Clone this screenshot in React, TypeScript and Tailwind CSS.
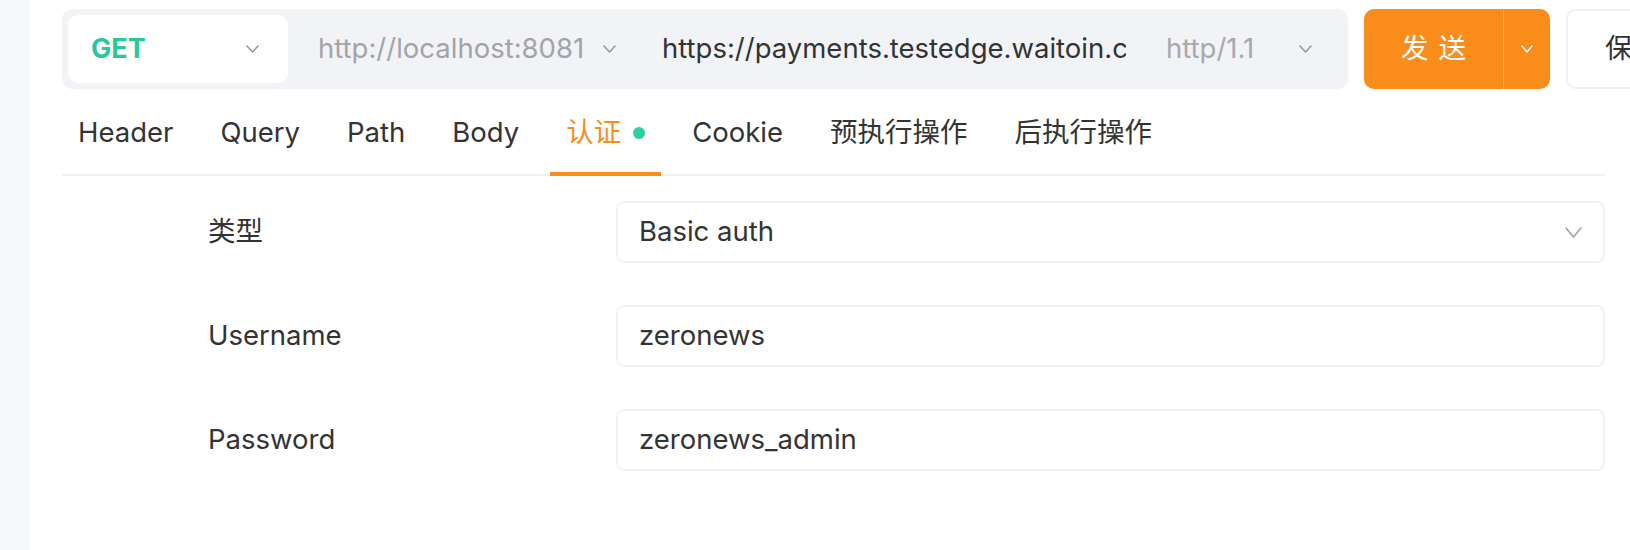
import { Fragment } from 'react';

const font = { fontFamily: 'Inter, "Noto Sans CJK SC", sans-serif' };

function Chevron({ color = '#9a9a9a', w = 13, h = 8 }: { color?: string; w?: number; h?: number }) {
  return (
    <svg width={w} height={h} viewBox={`0 0 ${w} ${h}`} className="flex-none">
      <polyline
        points={`1,1 ${w / 2},${h - 1} ${w - 1},1`}
        fill="none"
        stroke={color}
        strokeWidth="1.6"
        strokeLinecap="round"
        strokeLinejoin="round"
      />
    </svg>
  );
}

export default function App() {
  const tabs = ['Header', 'Query', 'Path', 'Body', '认证', 'Cookie', '预执行操作', '后执行操作'];

  const fields = [
    { label: '类型', value: 'Basic auth', select: true },
    { label: 'Username', value: 'zeronews', select: false },
    { label: 'Password', value: 'zeronews_admin', select: false },
  ];

  return (
    <div className="flex w-full h-[550px] overflow-hidden bg-white" style={font}>
      {/* left rail */}
      <div className="w-[30px] flex-none bg-[#f7f8fa]" />

      <div className="flex-1 min-w-0 pl-[32px] pt-[9px] pr-[25px]">
        {/* request bar */}
        <div className="flex items-center gap-[16px] w-[1700px]">
          <div className="flex items-center w-[1286px] h-[80px] p-[6px] rounded-[10px] bg-[#f2f3f7] flex-none">
            <div className="flex items-center justify-between w-[220px] h-[68px] pl-[23px] pr-[29px] rounded-[10px] bg-white flex-none">
              <span className="text-[27px] font-bold text-[#27c99c]">GET</span>
              <Chevron />
            </div>
            <span className="ml-[30px] w-[267px] flex-none text-[27.5px] text-[#a3a3a8] whitespace-nowrap">http://localhost:8081</span>
            <span className="ml-[18px]"><Chevron /></span>
            <div className="ml-[46px] w-[464px] flex-none overflow-hidden whitespace-nowrap text-[27.5px] text-[#333]">
              https://payments.testedge.waitoin.com/api/v1/auth
            </div>
            <span className="ml-[40px] w-[92px] flex-none text-[27.5px] text-[#a8a8ad] whitespace-nowrap">http/1.1</span>
            <span className="ml-[41px]"><Chevron /></span>
          </div>

          <div className="flex h-[80px] rounded-[10px] bg-[#f98c1a] overflow-hidden flex-none">
            <button className="flex items-center justify-center gap-[10px] w-[139px] text-[27.5px] text-white">
              <span>发</span>
              <span>送</span>
            </button>
            <div className="w-[1px] bg-[#fbae5c]" />
            <button className="flex items-center justify-center w-[46px]">
              <Chevron color="#ffffff" w={12} h={8} />
            </button>
          </div>

          <button className="h-[80px] px-[37px] rounded-[10px] border-2 border-[#f0f0f2] bg-white text-[27.5px] text-[#333] flex-none">
            保存
          </button>
        </div>

        {/* tabs */}
        <div className="flex gap-[15px] h-[87px] pt-[2px] border-b-2 border-[#f0f0f0]">
          {tabs.map((tab) => {
            const active = tab === '认证';
            return (
              <div key={tab} className="relative flex items-center px-[16px] h-full">
                <span className={`text-[27.5px] whitespace-nowrap ${active ? 'text-[#f98c1a]' : 'text-[#333]'}`}>{tab}</span>
                {active && (
                  <Fragment>
                    <span className="ml-[12px] w-[12px] h-[12px] rounded-full bg-[#2ccf9f]" />
                    <span className="absolute left-0 right-0 bottom-[-2px] h-[4px] bg-[#f98c1a]" />
                  </Fragment>
                )}
              </div>
            );
          })}
        </div>

        {/* auth form */}
        <div className="flex flex-col gap-[42px] mt-[25px]">
          {fields.map((f) => (
            <div key={f.label} className="flex items-center h-[62px]">
              <div className="w-[554px] pl-[146px] text-[27.5px] text-[#333] flex-none">{f.label}</div>
              <div className="flex items-center justify-between flex-1 h-full pl-[21px] pr-[21px] rounded-[8px] border-2 border-[#f2f2f3] bg-white">
                <span className="text-[27.5px] text-[#333]">{f.value}</span>
                {f.select && <Chevron color="#a5a5a5" w={17} h={11} />}
              </div>
            </div>
          ))}
        </div>
      </div>
    </div>
  );
}
